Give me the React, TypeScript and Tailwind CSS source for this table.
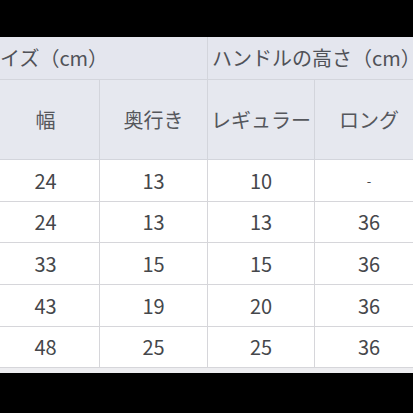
const rows = [
  { h: "h-[42px]", cells: ["24", "13", "10", "-"] },
  { h: "h-[41px]", cells: ["24", "13", "13", "36"] },
  { h: "h-[42px]", cells: ["33", "15", "15", "36"] },
  { h: "h-[42px]", cells: ["43", "19", "20", "36"] },
  { h: "h-[41px]", cells: ["48", "25", "25", "36"] },
];

const font = { fontFamily: '"Noto Sans CJK JP", "Noto Sans", sans-serif' };

export default function App() {
  return (
    <div className="w-[413px] h-[413px] bg-black overflow-hidden flex flex-col" style={font}>
      <div className="h-[37px] shrink-0" />

      <div className="-ml-[8px] w-[431px] grid grid-cols-[108px_108px_107px_108px] text-[20px] shrink-0">
        {/* header row 1 */}
        <div className="col-span-2 h-[43px] bg-[#e4e6ee] border-b border-r border-[#d3d5dc] flex items-center text-[#505258] whitespace-nowrap">
          <span className="-ml-[12px]">サイズ（cm）</span>
        </div>
        <div className="col-span-2 h-[43px] bg-[#e4e6ee] border-b border-[#d3d5dc] flex items-center pl-[4px] text-[#505258] whitespace-nowrap">
          ハンドルの高さ（cm）
        </div>

        {/* header row 2 */}
        {["幅", "奥行き", "レギュラー", "ロング"].map((t, i) => (
          <div
            key={t}
            className={`h-[80px] bg-[#e6e8ef] border-b border-[#d3d5dc] flex items-center justify-center text-[#55575c] whitespace-nowrap ${i < 3 ? "border-r" : ""}`}
          >
            {t}
          </div>
        ))}

        {/* data rows */}
        {rows.map((r, ri) =>
          r.cells.map((c, ci) => (
            <div
              key={`${ri}-${ci}`}
              className={`${r.h} bg-white border-b border-[#d6d6da] flex items-center justify-center text-[#45474b] ${ci < 3 ? "border-r" : ""} ${c === "-" ? "text-[13px]" : ""}`}
            >
              {c}
            </div>
          ))
        )}
      </div>

      <div className="h-[5px] bg-[#ededf0] shrink-0" />
      <div className="flex-1 bg-black" />
    </div>
  );
}
